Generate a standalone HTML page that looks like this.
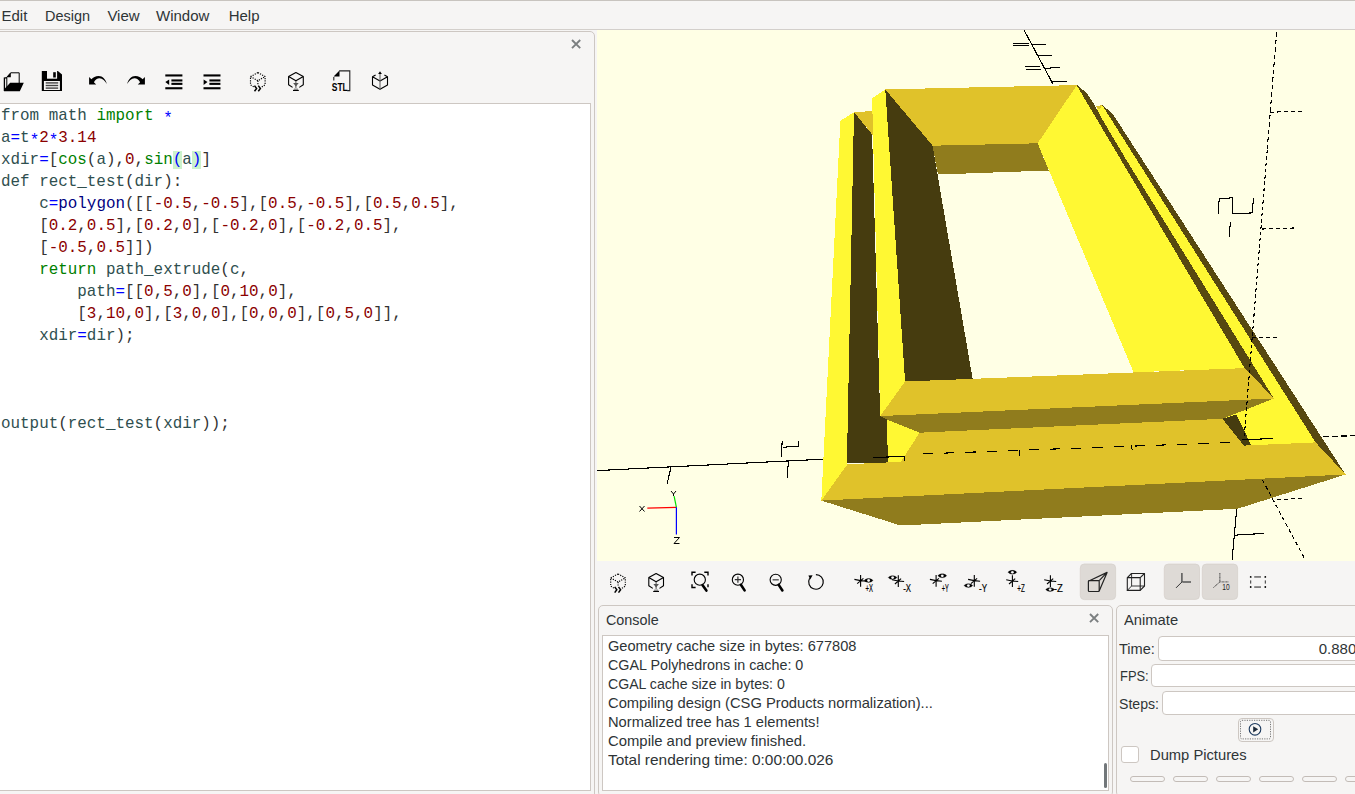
<!DOCTYPE html>
<html><head><meta charset="utf-8">
<style>
*{margin:0;padding:0;box-sizing:border-box}
html,body{width:1355px;height:794px;overflow:hidden;background:#f6f5f4;font-family:"Liberation Sans",sans-serif;color:#2e3436;position:relative;-webkit-font-smoothing:antialiased}
.a{position:absolute}
.m{position:absolute;top:8.2px;font-size:15px;line-height:15px;white-space:pre}
.code{position:absolute;left:1px;top:104.9px;font-family:"Liberation Mono",monospace;font-size:15.9px;line-height:22px;white-space:pre;color:#333}
.i{color:#2f4f4f}
.g{color:#008000}.n{color:#8b0000}.o{color:#0000ff}.b{color:#000080}
.st{position:relative;top:3.5px}
.hl{background:#ccf2cc;color:#0000ff}
.con{position:absolute;left:607.5px;top:637px;font-size:14.8px;line-height:19px;white-space:pre;color:#2e3436}
svg{position:absolute;overflow:visible}
</style></head><body>
<!-- menu bar -->
<div class="a" style="left:0;top:0;width:1355px;height:1px;background:#c8c4bf"></div>
<div class="m" style="left:1.5px">Edit</div>
<div class="m" style="left:44.5px;transform:scaleX(0.964);transform-origin:0 0">Design</div>
<div class="m" style="left:107.4px">View</div>
<div class="m" style="left:156px">Window</div>
<div class="m" style="left:228.7px">Help</div>
<div class="a" style="left:0;top:29px;width:1355px;height:1px;background:#d3cfcb"></div>

<!-- editor dock -->
<div class="a" style="left:-6px;top:31px;width:601px;height:780px;border:1px solid #cdc7c2;border-radius:5px"></div>
<div class="a" style="left:-1px;top:103px;width:592px;height:688px;border:1px solid #cdc7c2;background:#fff"></div>
<pre class="code"><span class="i">from</span> <span class="i">math</span> <span class="g">import</span> <span class="o st">*</span>
<span class="i">a</span><span class="o">=</span><span class="i">t</span><span class="o st">*</span><span class="n">2</span><span class="o st">*</span><span class="n">3.14</span>
<span class="i">xdir</span><span class="o">=</span>[<span class="g">cos</span>(<span class="i">a</span>),<span class="n">0</span>,<span class="g">sin</span><span class="hl">(</span><span class="i">a</span><span class="hl">)</span>]
<span class="i">def</span> <span class="i">rect_test</span>(<span class="i">dir</span>):
    <span class="i">c</span><span class="o">=</span><span class="b">polygon</span>([[<span class="n">-0.5</span>,<span class="n">-0.5</span>],[<span class="n">0.5</span>,<span class="n">-0.5</span>],[<span class="n">0.5</span>,<span class="n">0.5</span>],
    [<span class="n">0.2</span>,<span class="n">0.5</span>],[<span class="n">0.2</span>,<span class="n">0</span>],[<span class="n">-0.2</span>,<span class="n">0</span>],[<span class="n">-0.2</span>,<span class="n">0.5</span>],
    [<span class="n">-0.5</span>,<span class="n">0.5</span>]])
    <span class="g">return</span> <span class="i">path_extrude</span>(<span class="i">c</span>,
        <span class="i">path</span><span class="o">=</span>[[<span class="n">0</span>,<span class="n">5</span>,<span class="n">0</span>],[<span class="n">0</span>,<span class="n">10</span>,<span class="n">0</span>],
        [<span class="n">3</span>,<span class="n">10</span>,<span class="n">0</span>],[<span class="n">3</span>,<span class="n">0</span>,<span class="n">0</span>],[<span class="n">0</span>,<span class="n">0</span>,<span class="n">0</span>],[<span class="n">0</span>,<span class="n">5</span>,<span class="n">0</span>]],
    <span class="i">xdir</span><span class="o">=</span><span class="i">dir</span>);



<span class="i">output</span>(<span class="i">rect_test</span>(<span class="i">xdir</span>));</pre>

<!-- splitter -->
<!-- 3D view -->
<div class="a" style="left:597px;top:30px;width:758px;height:531px;background:#ffffe5;overflow:hidden">
<svg style="left:0;top:0" width="758" height="531" viewBox="597 30 758 531">
<g stroke="none" shape-rendering="crispEdges">
<polygon fill="#e0c22a" points="885.3,89.4 1076.9,85.1 1037.6,143.3 932.6,145.7"/>
<polygon fill="#907c1d" points="932.6,145.7 1037.6,143.3 1048.9,170.5 937.9,174.5"/>
<polygon fill="#463c0f" points="885.3,89.4 932.6,145.7 973.5,384 905.1,386"/>
<polygon fill="#e0c22a" points="854,112.2 873.5,111 873.5,136"/>
<polygon fill="#463c0f" points="854,112.2 872.1,134.4 880.2,416.1 887.1,419.6 887.8,462.5 846.9,463.2"/>
<polygon fill="#fff833" points="872.1,98.1 885.3,89.4 905.1,381.5 880.2,416.1"/>
<polygon fill="#fff833" points="840.4,120.8 854,112.2 846.9,463.2 847.4,464.3 821.3,500.6"/>
<polygon fill="#fff833" points="1099,107 1102.2,105.2 1315.6,442.4 1243.9,445.6 1222.5,418.8 1200,380 1085,120"/>
<polygon fill="#e0c22a" points="1095.7,106.2 1102.2,105.2 1099,110"/>
<polygon fill="#fff833" points="1076.9,85.1 1244.5,368 1133.6,372.3 1037.6,143.3"/>
<polygon fill="#574810" points="1076.5,85 1078,85.5 1083.1,90.1 1088.1,95.1 1094.2,104.2 1101.7,118.3 1126.4,160 1273.9,398.5 1244.5,368"/>
<polygon fill="#574810" points="1102.2,105.2 1112.3,113.2 1345.6,474.5 1315.6,442.4"/>
<polygon fill="#463c0f" points="1222.5,418.8 1236.4,414.6 1251.4,445.6 1243.9,445.6"/>
<polygon fill="#fff833" points="887.1,419.6 919.6,432.7 900.9,461.8 887.8,462.5"/>
<polygon fill="#e0c22a" points="905.1,381.5 1245,368.1 1273.9,398.5 880.2,416.1"/>
<polygon fill="#907c1d" points="880.2,416.1 1273.9,398.5 1222.5,418.8 919.6,432.7 887.1,419.6"/>
<polygon fill="#e0c22a" points="847.4,464.3 900.9,461.8 919.6,432.7 1222.5,418.8 1243.9,445.6 1315.6,442.4 1345.6,474.5 821.3,500.6"/>
<polygon fill="#907c1d" points="821.3,500.6 1345.6,474.5 1237.4,508.8 900.7,525.5"/>
</g>
<g stroke="#000" stroke-width="1.1" fill="none" shape-rendering="crispEdges">
<path d="M597,470.6 L822.7,459.2 M873.5,457.5 L904.1,456.4 M1242.5,440 L1273,438.4"/>
<path d="M923,453.9 L1236,442.3" stroke-dasharray="10.2 11"/>
<path d="M1322.7,436.4 L1355,435.8" stroke-dasharray="6 3"/>
<path d="M1269.6,112.2 L1304.3,111.2 M1262,229 L1294,228 M1251.9,337.9 L1279.7,337.4 M1276.6,499.8 L1304.1,498.2" stroke-dasharray="4.5 2.5"/>
<path d="M1276.6,32.5 L1267.2,150" stroke-dasharray="4.5 3"/>
<path d="M1267.2,150 L1244,440" stroke-dasharray="3.5 2.8"/>
<path d="M1262.4,480 L1305.4,560" stroke-dasharray="4 3"/>
<path d="M671.1,466.7 L667.2,483.5 M788.4,461.4 L787.1,477.7 M782.2,441.2 L781.3,456.7 M782.7,447.3 L798.6,446.1 M798.6,441.2 L798.6,447"/>
<path d="M1024.2,30.4 L1053.2,84.5 M1032.3,44.5 L1046,44.5 M1038.3,55.8 L1051.6,55.8 M1045.2,68.3 L1059.7,67.5 M1052.4,81.6 L1066.9,81.6"/>
<path d="M1013.3,43.5 L1028.6,43.5 M1013.3,45.3 L1028.6,45.3 M1025,66.5 L1040,66.5 M1026,69.8 L1040.7,69.8" stroke-width="1.3"/>
<path d="M1218.2,213.9 L1219.2,198.8 L1232.3,197.8 L1232.3,213.9 L1252.4,212.9 L1253.4,197.8 M1230.3,222 L1229.3,237.1"/>
<path d="M1236.7,508.8 L1232.1,560 M1234.4,535.2 L1263.9,533.4"/>
<path d="M1019.2,450 L1019.2,455.8 M1131,445.2 L1132.5,450.5 M904.7,455.5 L904.7,461"/>
</g>
<path d="M676.4,507.3 L647.3,508.2" stroke="#ff0000" stroke-width="1.2"/>
<path d="M676.4,507.3 L674.1,496.2" stroke="#00e000" stroke-width="1.2"/>
<path d="M676.4,507.3 L676.4,534.6" stroke="#0000ff" stroke-width="1.2"/>
<g stroke="#000" stroke-width="1" fill="none">
<path d="M639.5,506 L644.5,511.5 M644.5,506 L639.5,511.5"/>
<path d="M671,491 L673.5,494 L676,491 M673.5,494 L673.5,496"/>
<path d="M674,537.5 L679.5,537.5 L674,543.5 L679.5,543.5"/>
</g>
</svg>

</div>

<!-- console dock -->
<div class="a" style="left:598px;top:605px;width:515px;height:192px;border:1px solid #cdc7c2;border-radius:5px"></div>
<div class="m" style="left:605.7px;top:612.3px;transform:scaleX(0.956);transform-origin:0 0">Console</div>
<div class="a" style="left:602px;top:635px;width:507px;height:156px;border:1px solid #cdc7c2;background:#fff"></div>
<div class="con"><span style="display:inline-block;transform:scaleX(0.987);transform-origin:0 0">Geometry cache size in bytes: 677808</span>
<span style="display:inline-block;transform:scaleX(0.968);transform-origin:0 0">CGAL Polyhedrons in cache: 0</span>
<span style="display:inline-block;transform:scaleX(0.954);transform-origin:0 0">CGAL cache size in bytes: 0</span>
<span style="display:inline-block;transform:scaleX(0.995);transform-origin:0 0">Compiling design (CSG Products normalization)...</span>
<span style="display:inline-block;transform:scaleX(0.993);transform-origin:0 0">Normalized tree has 1 elements!</span>
<span style="display:inline-block;transform:scaleX(1.004);transform-origin:0 0">Compile and preview finished.</span>
<span style="display:inline-block;transform:scaleX(1.042);transform-origin:0 0">Total rendering time: 0:00:00.026</span></div>
<div class="a" style="left:1104.2px;top:763.2px;width:2.8px;height:24.5px;background:#72777a;border-radius:1.5px"></div>

<!-- animate dock -->
<div class="a" style="left:1116px;top:605px;width:260px;height:192px;border:1px solid #cdc7c2;border-radius:5px"></div>
<div class="m" style="left:1123.8px;top:612px;transform:scaleX(0.983);transform-origin:0 0">Animate</div>
<div class="m" style="left:1119.3px;top:641px;transform:scaleX(0.972);transform-origin:0 0">Time:</div>
<div class="a" style="left:1158px;top:636px;width:220px;height:24.5px;border:1px solid #cdc7c2;border-radius:4px;background:#fff"></div>
<div class="m" style="left:1318.7px;top:641px">0.880</div>
<div class="m" style="left:1119.5px;top:668px;transform:scaleX(0.86);transform-origin:0 0">FPS:</div>
<div class="a" style="left:1150.5px;top:663.5px;width:220px;height:23.5px;border:1px solid #cdc7c2;border-radius:4px;background:#fff"></div>
<div class="m" style="left:1119.4px;top:695.5px;transform:scaleX(0.94);transform-origin:0 0">Steps:</div>
<div class="a" style="left:1161.5px;top:690.5px;width:220px;height:24px;border:1px solid #cdc7c2;border-radius:4px;background:#fff"></div>
<div class="a" style="left:1237.5px;top:717.5px;width:36px;height:24px;border:1px solid #cdc7c2;border-radius:4px;background:#f6f5f4"></div>
<div class="a" style="left:1121px;top:745.5px;width:18px;height:17px;border:1px solid #cdc7c2;border-radius:3px;background:#fff"></div>
<div class="m" style="left:1149.9px;top:747.3px;transform:scaleX(0.982);transform-origin:0 0">Dump Pictures</div>
<svg style="left:0;top:0;pointer-events:none" width="1355" height="794" viewBox="0 0 1355 794">
<!-- close buttons -->
<path d="M572,40 L580.2,48.2 M580.2,40 L572,48.2" stroke="#7b7f80" stroke-width="1.9"/>
<path d="M1090,614 L1098.2,622.2 M1098.2,614 L1090,622.2" stroke="#7b7f80" stroke-width="1.9"/>
<!-- open folder -->
<g>
<path d="M4.5,77.8 L7,77.8 M4.4,77.6 L4.4,91" stroke="#000" stroke-width="1.3" fill="none"/>
<path d="M6.8,77.2 L10.7,72.8 L19.2,72.8 L19.2,83.5 M6.8,77.2 L6.8,88" stroke="#000" stroke-width="1" fill="none"/>
<path d="M6.6,77.2 L10.8,72.6 L10.8,77.2 Z" fill="#000"/>
<path d="M10.2,82.8 L23.8,82.8 L19.8,91.3 L4,91.3 L4.6,88.8 Z" fill="#000"/>
</g>
<!-- save -->
<g>
<path d="M41.8,70.9 L57.9,70.9 L62,74.6 L62,91 L41.8,91 Z" fill="#000"/>
<rect x="47" y="70.9" width="10.1" height="7.8" fill="#f6f5f4"/>
<rect x="53.2" y="72.2" width="2.6" height="5.3" fill="#000"/>
<rect x="43.9" y="81" width="16" height="9" fill="#f6f5f4"/>
<rect x="45.7" y="82.2" width="12.5" height="1.4" fill="#444"/>
<rect x="45.7" y="84.8" width="12.5" height="1.4" fill="#444"/>
<rect x="45.7" y="87.4" width="12.5" height="1.4" fill="#444"/>
</g>
<!-- undo / redo -->
<path id="undo" d="M89.1,77.1 L89.1,84.6 L96.2,84.6 L93.9,82.3 C95.3,79.6 97.5,78.2 99.6,78.3 C102.6,78.5 105,80.8 106.8,83.9 C105.8,79.3 102.6,75.9 98.6,75.9 C95.6,75.9 93,77.3 91.4,79.3 Z" fill="#000"/>
<use href="#undo" transform="translate(234,0) scale(-1,1)"/>
<!-- unindent -->
<g fill="#000">
<rect x="165.3" y="74.4" width="17.1" height="2.1"/>
<rect x="171.4" y="79.4" width="11" height="2.1"/>
<rect x="171.4" y="82.8" width="11" height="2.1"/>
<rect x="165.3" y="87.2" width="17.1" height="2.1"/>
<path d="M165.3,82.1 L169.2,79.4 L169.2,84.9 Z"/>
<rect x="203.5" y="74.4" width="17" height="2.1"/>
<rect x="209.4" y="79.4" width="11" height="2.1"/>
<rect x="209.4" y="82.8" width="11" height="2.1"/>
<rect x="203.5" y="87.2" width="17" height="2.1"/>
<path d="M207.5,82.1 L203.6,79.4 L203.6,84.9 Z"/>
</g>
<!-- dotted cube >> -->
<g id="dcube">
<path d="M257.9,72.6 L250.5,76.6 L250.5,84.8 L254,87 M261.8,87 L265.1,84.8 L265.1,76.6 L257.9,72.6 M250.5,76.6 L257.9,80.7 L265.1,76.6 M257.9,80.7 L257.9,84.5" stroke="#000" stroke-width="1.15" stroke-dasharray="1.2 1.2" fill="none"/>
<path d="M254.5,85.6 L256.6,88.5 L254.5,91.3 M258.3,85.6 L260.4,88.5 L258.3,91.3" stroke="#000" stroke-width="1.5" fill="none"/>
</g>
<!-- hourglass cube -->
<g id="hcube">
<path d="M295.9,72.4 L288.6,76.6 L288.6,84.8 L292.6,87.4 M299.3,87.4 L303.3,84.8 L303.3,76.6 L295.9,72.4 M288.6,76.6 L295.9,80.7 L303.3,76.6" stroke="#000" stroke-width="1.1" fill="none" stroke-linejoin="round"/>
<path d="M293.2,83.1 L298.7,83.1 L295.9,86.4 Z" fill="#555"/>
<path d="M295.9,81 L295.9,88" stroke="#555" stroke-width="1"/>
<path d="M294.2,88.5 L297.7,88.5 L298.5,90 L293.4,90 Z" fill="#888"/>
<rect x="293" y="90" width="5.8" height="1" fill="#000"/>
</g>
<!-- STL -->
<g>
<path d="M333.8,77 L333.8,80.6 M339.2,70.9 L349.8,70.9 L349.8,90.6 L347.2,90.6" stroke="#222" stroke-width="1.1" fill="none"/>
<path d="M333.6,76.6 L339.5,70.6 L339.5,76.6 Z" fill="#000"/>
<text x="331.8" y="91.3" font-family="Liberation Sans" font-weight="bold" font-size="10.6" textLength="16" lengthAdjust="spacingAndGlyphs" fill="#000">STL</text>
</g>
<!-- export cube -->
<g>
<path d="M375.6,75 L372.5,76.8 L372.5,85.1 L380,89.2 L387.5,85.1 L387.5,76.8 L384.4,75 M372.5,76.8 L380,81 L387.5,76.8" stroke="#000" stroke-width="1.1" fill="none" stroke-linejoin="round"/>
<path d="M380,73.5 L380,89" stroke="#666" stroke-width="1.1"/>
<path d="M378.1,74 L381.9,74 L380,71.2 Z" fill="#000"/>
</g>
<!-- 3D toolbar -->
<use href="#dcube" transform="translate(360.2,501.3)"/>
<use href="#hcube" transform="translate(360.2,501)"/>
<!-- zoom all -->
<g stroke="#000" fill="none">
<circle cx="699.8" cy="579.7" r="5.6" stroke-width="1.1"/>
<path d="M702.6,585.2 L706.4,590.6" stroke-width="2.6" stroke-linecap="round"/>
<path d="M695.6,572.3 L692,572.3 L692,575.4 M704.3,572.3 L708,572.3 L708,575.4 M692,584.3 L692,587.5 L695.6,587.5 M708,584.3 L708,587.2" stroke-width="1.4"/>
</g>
<!-- zoom in -->
<g stroke="#000" fill="none">
<circle cx="737.9" cy="579.7" r="5.6" stroke-width="1.1"/>
<path d="M740.9,584.8 L744.6,590.4" stroke-width="2.6" stroke-linecap="round"/>
<path d="M734.8,579.7 L741,579.7 M737.9,576.6 L737.9,582.8" stroke="#333" stroke-width="1.2"/>
</g>
<!-- zoom out -->
<g stroke="#000" fill="none">
<circle cx="775.7" cy="579.8" r="5.6" stroke-width="1.1"/>
<path d="M778.7,584.9 L782.4,590.5" stroke-width="2.6" stroke-linecap="round"/>
<path d="M772.6,579.8 L778.8,579.8" stroke="#555" stroke-width="1.4"/>
</g>
<!-- reset view -->
<g>
<path d="M815.9,574.6 A7.3,7.3 0 1 1 809.6,578.3" stroke="#000" stroke-width="1.15" fill="none"/>
<path d="M808.4,575.6 L812.6,575.2 L810.2,579.6 Z" fill="#000"/>
</g>
<!-- view icons: asterisk + eye -->
<defs>
<g id="ast"><path d="M0,-5.7 L0,6 M-6.2,-1.3 C-3,-0.6 3,0.3 5.8,0.5 M-3.4,3 L2.8,-2.4" stroke="#000" stroke-width="1.1" fill="none"/></g>
<g id="eye"><path d="M-4.4,0 C-2.6,-2.6 2.6,-2.6 4.4,0 C2.6,2.6 -2.6,2.6 -4.4,0 Z" fill="#000"/><ellipse cx="0" cy="0" rx="1.5" ry="1.4" fill="#fff"/></g>
</defs>
<g font-family="Liberation Sans" font-size="10.5" fill="#000" stroke="#000" stroke-width="0.2">
<use href="#ast" x="860.6" y="580.7"/><use href="#eye" x="868.6" y="580.5"/>
<text x="865.5" y="592.3" textLength="7.4" lengthAdjust="spacingAndGlyphs">+X</text>
<use href="#eye" x="892.6" y="577.6"/><use href="#ast" x="898.3" y="581"/>
<text x="903.2" y="592.3" textLength="7.8" lengthAdjust="spacingAndGlyphs">-X</text>
<use href="#ast" x="936.1" y="580.7"/><use href="#eye" x="942.3" y="575.8"/>
<text x="941.8" y="592.3" textLength="7" lengthAdjust="spacingAndGlyphs">+Y</text>
<use href="#ast" x="974.3" y="580.7"/><use href="#eye" x="968.4" y="585.6"/>
<text x="979" y="592.3" textLength="8" lengthAdjust="spacingAndGlyphs">-Y</text>
<use href="#ast" x="1012.4" y="581"/><use href="#eye" x="1012.4" y="572.3"/>
<text x="1017.3" y="592.2" textLength="7.5" lengthAdjust="spacingAndGlyphs">+Z</text>
<use href="#ast" x="1050.4" y="581"/><use href="#eye" x="1050.1" y="589.6"/>
<text x="1053.8" y="592.2" textLength="9" lengthAdjust="spacingAndGlyphs">-Z</text>
</g>
<!-- pressed buttons -->
<rect x="1080.3" y="564" width="35.3" height="35.6" rx="4" fill="#dedad6" stroke="#d6d1cc" stroke-width="0.8"/>
<rect x="1164.3" y="564.1" width="35.2" height="35.3" rx="4" fill="#dedad6" stroke="#d6d1cc" stroke-width="0.8"/>
<rect x="1202.3" y="564.1" width="35.3" height="35.3" rx="4" fill="#dedad6" stroke="#d6d1cc" stroke-width="0.8"/>
<!-- perspective -->
<g stroke="#222" stroke-width="1.2" fill="none" stroke-linejoin="round">
<rect x="1088.4" y="580.7" width="10.8" height="10.8" rx="0.8"/>
<path d="M1089.4,580.7 L1107.1,572.4 L1099.2,580.7 M1107.1,572.4 L1099.2,591"/>
</g>
<!-- ortho -->
<g stroke="#222" stroke-width="1.1" fill="none" stroke-linejoin="round">
<path d="M1127.3,577.6 L1131.5,573.5 L1144.5,573.5 L1144.5,586 L1140.2,590.4 L1127.3,590.4 Z"/>
<path d="M1127.3,577.6 L1140.2,577.6 L1140.2,590.4 M1140.2,577.6 L1144.5,573.5"/>
<path d="M1131.6,573.5 L1131.6,586 L1144.5,586 M1131.6,586 L1127.3,590.4" stroke-width="0.9"/>
</g>
<!-- axes -->
<g stroke="#555" fill="none">
<path d="M1181.9,573 L1181.9,582.2 M1182.5,581.9 L1191,581.9" stroke-width="1.5"/>
<path d="M1181.9,582 L1176,587.9" stroke-width="1" stroke="#333"/>
</g>
<!-- scale -->
<g fill="none">
<path d="M1219.8,573 L1219.8,582" stroke="#555" stroke-width="1.5" stroke-dasharray="0.8 0.6"/>
<path d="M1220.5,581.8 L1228.5,581.8" stroke="#555" stroke-width="1.3" stroke-dasharray="0.8 0.6"/>
<path d="M1219.8,582 L1213.5,587.5" stroke="#333" stroke-width="1" stroke-dasharray="1.2 0.6"/>
<text x="1222.2" y="590.2" font-family="Liberation Sans" font-size="8.6" fill="#222" textLength="7.4" lengthAdjust="spacingAndGlyphs">10</text>
</g>
<!-- edges -->
<g fill="#000">
<circle cx="1250.7" cy="576.9" r="0.9"/><circle cx="1265.3" cy="576.9" r="0.9"/>
<circle cx="1250.7" cy="587" r="0.9"/><circle cx="1265.3" cy="587" r="0.9"/>
<rect x="1254.2" y="576.4" width="6.8" height="1.1" fill="#333"/>
<rect x="1254.2" y="586.5" width="6.8" height="1.1" fill="#333"/>
<rect x="1250.2" y="580.4" width="1" height="3.2" fill="#333"/>
<rect x="1264.8" y="580.4" width="1" height="3.2" fill="#333"/>
</g>
<!-- play button -->
<rect x="1240.5" y="720.3" width="30" height="18.6" rx="1.5" fill="none" stroke="#555" stroke-width="0.8" stroke-dasharray="1.2 1.2"/>
<circle cx="1255" cy="729.3" r="5.8" fill="none" stroke="#1c3a5e" stroke-width="1.1"/>
<path d="M1253.2,726.2 L1258.2,729.3 L1253.2,732.4 Z" fill="#1c2a3a"/>
<!-- slider pills -->
<g fill="#f6f5f4" stroke="#bdb6b0" stroke-width="0.9">
<rect x="1130.5" y="776.5" width="34" height="5" rx="2.5"/>
<rect x="1173.5" y="776.5" width="34" height="5" rx="2.5"/>
<rect x="1216.5" y="776.5" width="34" height="5" rx="2.5"/>
<rect x="1259.5" y="776.5" width="34" height="5" rx="2.5"/>
<rect x="1302.5" y="776.5" width="34" height="5" rx="2.5"/>
<rect x="1345.5" y="776.5" width="34" height="5" rx="2.5"/>
</g>
</svg>

</body></html>
